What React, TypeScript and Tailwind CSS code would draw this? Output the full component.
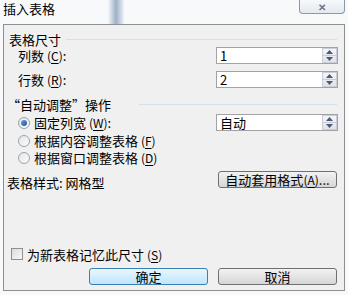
import React from "react";

const font = { fontFamily: '"Noto Sans CJK SC", "Noto Sans", sans-serif' };

function Key({ k }: { k: string }) {
  return (
    <span className="text-[12px]">
      (<span className="underline underline-offset-2">{k}</span>)
    </span>
  );
}

function Spinner() {
  return (
    <div className="flex h-[15px] w-[15px] flex-col border border-[#c9ced6] bg-gradient-to-b from-[#f4f6f9] to-[#dfe3ea]">
      <div className="flex flex-1 items-center justify-center border-b border-[#c9ced6]">
        <svg width="7" height="4" viewBox="0 0 7 4">
          <path d="M0 4 L3.5 0 L7 4 Z" fill="#4c5a78" />
        </svg>
      </div>
      <div className="flex flex-1 items-center justify-center">
        <svg width="7" height="4" viewBox="0 0 7 4">
          <path d="M0 0 L3.5 4 L7 0 Z" fill="#4c5a78" />
        </svg>
      </div>
    </div>
  );
}

function Field({ value }: { value: string }) {
  return (
    <div className="flex h-[17px] w-[122px] items-center justify-between border border-[#a3a3a3] bg-white pl-[3px] pr-[0px]">
      <span className="text-[13px] leading-none text-black">{value}</span>
      <Spinner />
    </div>
  );
}

function Radio({ checked }: { checked?: boolean }) {
  return (
    <span className="flex h-[12px] w-[12px] items-center justify-center rounded-full border border-[#9aa2ab] bg-gradient-to-br from-[#e4e6e9] to-[#fbfbfb]">
      {checked && (
        <span className="h-[6px] w-[6px] rounded-full bg-gradient-to-br from-[#6fa4e0] to-[#1c4f93]" />
      )}
    </span>
  );
}

function Btn({ children, primary }: { children: React.ReactNode; primary?: boolean }) {
  return (
    <div
      className={
        primary
          ? "flex h-[17px] w-[119px] items-center justify-center rounded-[3px] border border-[#3c7fb1] bg-gradient-to-b from-[#eaf6fd] to-[#bee6fd] text-[13px] leading-none text-black"
          : "flex h-[17px] w-[119px] items-center justify-center rounded-[3px] border border-[#707070] bg-gradient-to-b from-[#f2f2f2] to-[#d6d6d6] text-[13px] leading-none text-black"
      }
    >
      {children}
    </div>
  );
}

export default function App() {
  return (
    <div className="relative h-[295px] w-[348px] overflow-hidden bg-[#f7f9fb] text-black" style={font}>
      {/* title bar */}
      <div className="flex h-[24px] items-start">
        <span className="ml-[3px] mt-[2px] text-[13px] leading-[14px]">插入表格</span>
        <div className="ml-[53px] h-[24px] w-[16px] bg-gradient-to-r from-[#f7f9fb] via-[#9fb0c8] to-[#eef2f7]" />
        <div className="ml-auto mr-[3px] flex h-[14px] w-[46px] items-center justify-center rounded-b-[4px] border border-t-0 border-[#8d97a5] bg-gradient-to-b from-[#f6f9fc] to-[#e4e9ef]">
          <span className="text-[10px] font-bold leading-none text-[#6b7382]">✕</span>
        </div>
      </div>

      {/* panel */}
      <div className="mx-[3px] flex h-[267px] flex-col border border-[#8e8f8f] bg-[#f0f0f0] text-[13px] leading-none">
        <div className="mt-[7px] flex h-[14px] items-center pl-[5px] pr-[7px]">
          <span>表格尺寸</span>
          <div className="ml-[5px] h-px flex-1 bg-[#d5dfe5]" />
        </div>
        <div className="mt-px flex h-[17px] items-center justify-between pl-[14px] pr-[6px]">
          <span>
            列数 <Key k="C" />:
          </span>
          <Field value="1" />
        </div>
        <div className="mt-[7px] flex h-[17px] items-center justify-between pl-[14px] pr-[6px]">
          <span>
            行数 <Key k="R" />:
          </span>
          <Field value="2" />
        </div>
        <div className="mt-[9px] flex h-[14px] items-center pl-[3px] pr-[7px]">
          <span>“自动调整”操作</span>
          <div className="ml-[28px] h-px flex-1 bg-[#d5dfe5]" />
        </div>
        <div className="mt-[3px] flex h-[17px] items-center justify-between pl-[14px] pr-[6px]">
          <span className="flex items-center gap-[4px]">
            <Radio checked />
            <span>
              固定列宽 <Key k="W" />:
            </span>
          </span>
          <Field value="自动" />
        </div>
        <div className="mt-px flex h-[17px] items-center gap-[4px] pl-[14px]">
          <Radio />
          <span>
            根据内容调整表格 <Key k="F" />
          </span>
        </div>
        <div className="flex h-[17px] items-center gap-[4px] pl-[14px]">
          <Radio />
          <span>
            根据窗口调整表格 <Key k="D" />
          </span>
        </div>
        <div className="mt-[5px] flex h-[17px] items-center justify-between pl-[3px] pr-[7px]">
          <span className="mt-[5px]">表格样式: 网格型</span>
          <Btn>
            自动套用格式 <Key k="A" />
            ...
          </Btn>
        </div>
        <div className="mt-[59px] flex h-[14px] items-center gap-[4px] pl-[7px]">
          <span className="h-[12px] w-[12px] border border-[#8f8f8f] bg-gradient-to-br from-[#dcdcdc] to-[#f8f8f8]" />
          <span>
            为新表格记忆此尺寸 <Key k="S" />
          </span>
        </div>
        <div className="mt-[7px] flex justify-end gap-[10px] pr-[7px]">
          <Btn primary>确定</Btn>
          <Btn>取消</Btn>
        </div>
      </div>
    </div>
  );
}
